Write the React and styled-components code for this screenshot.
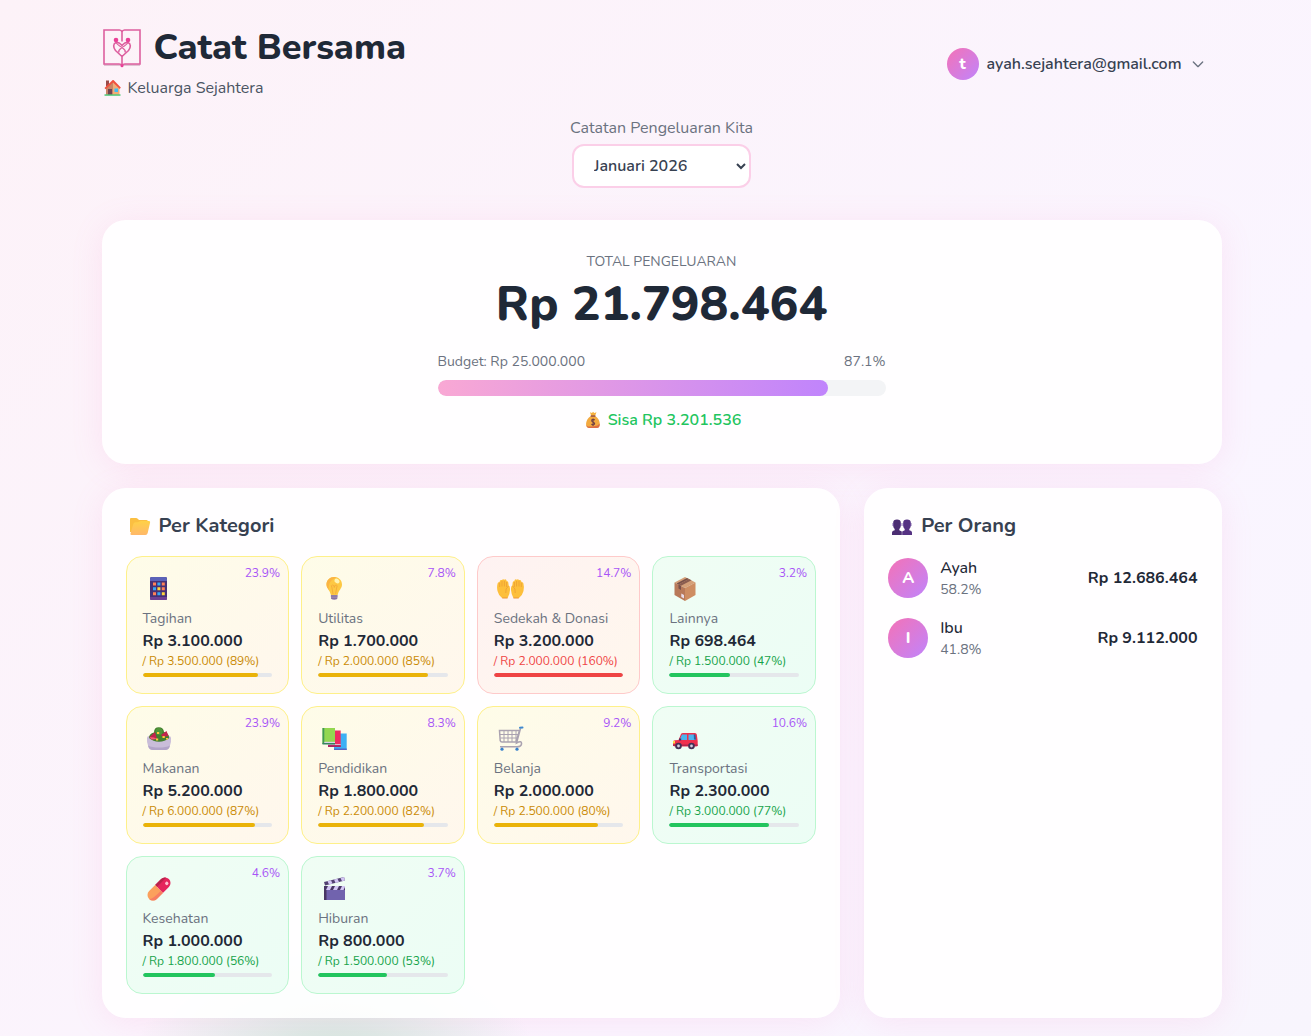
import React, { useState } from 'react';
import styled, { createGlobalStyle } from 'styled-components';

const GlobalStyle = createGlobalStyle`
    * {
        box-sizing: border-box;
    }
    body {
        margin: 0;
        min-height: 100vh;
        font-family: Nunito, Lato, "Open Sans", sans-serif;
        font-size: 16px;
        line-height: 24px;
        color: #1f2937;
        background:
            radial-gradient(200px 120px at 335px 1060px, rgba(205, 229, 217, 0.9), transparent),
            linear-gradient(135deg, #fdf2f8 0%, #faf5ff 70%, #f8f5fd 100%);
    }
    h1, h2, p, ul {
        margin: 0;
        padding: 0;
    }
`

const Page = styled.div`
    padding: 28px 0 18px 12px;
`

const Container = styled.div`
    max-width: 1152px;
    margin: 0 auto;
    padding: 0 16px;
`

const Header = styled.header`
    display: flex;
    align-items: center;
    justify-content: space-between;
    margin-bottom: 16px;
`

const Brand = styled.div`
    display: flex;
    align-items: center;
    gap: 12px;
    margin-bottom: 8px;
    h1 {
        font-size: 36px;
        line-height: 40px;
        font-weight: 800;
    }
`

const Family = styled.p`
    display: flex;
    align-items: center;
    gap: 4px;
    color: #4b5563;
`

const Avatar = styled.span`
    display: flex;
    align-items: center;
    justify-content: center;
    flex-shrink: 0;
    width: ${props => props.$size}px;
    height: ${props => props.$size}px;
    border-radius: 50%;
    background: linear-gradient(135deg, #f472b6, #c084fc);
    color: #fff;
    font-weight: 800;
`

const UserButton = styled.button`
    display: flex;
    align-items: center;
    gap: 8px;
    padding: 8px 16px;
    border: 0;
    background: none;
    font: inherit;
    font-weight: 600;
    color: #374151;
    cursor: pointer;
    svg {
        color: #6b7280;
    }
`

const Period = styled.div`
    display: flex;
    flex-direction: column;
    align-items: center;
    gap: 4px;
    margin-bottom: 32px;
    label {
        color: #6b7280;
    }
    select {
        min-width: 179px;
        padding: 8px 16px;
        border: 2px solid #fbcfe8;
        border-radius: 12px;
        background: #fff;
        font: inherit;
        font-weight: 600;
        color: #374151;
    }
`

const Card = styled.section`
    padding: ${props => props.$padding || 24}px;
    border-radius: 24px;
    background: rgba(255, 255, 255, 0.9);
    box-shadow: 0 4px 32px rgba(244, 114, 182, 0.13);
    h2 {
        display: flex;
        align-items: center;
        gap: 5px;
        margin-bottom: 16px;
        font-size: 20px;
        line-height: 28px;
        font-weight: 700;
        color: #374151;
    }
`

const Total = styled(Card)`
    display: flex;
    flex-direction: column;
    align-items: center;
    margin-bottom: 24px;
`

const TotalLabel = styled.p`
    margin-bottom: 8px;
    font-size: 14px;
    line-height: 20px;
    text-transform: uppercase;
    color: #6b7280;
`

const TotalAmount = styled.p`
    margin-bottom: 24px;
    font-size: 48px;
    line-height: 48px;
    font-weight: 800;
`

const Budget = styled.div`
    width: 100%;
    max-width: 448px;
`

const BudgetLine = styled.div`
    display: flex;
    justify-content: space-between;
    margin-bottom: 8px;
    font-size: 14px;
    line-height: 20px;
    color: #6b7280;
`

const Track = styled.div`
    height: ${props => props.$height}px;
    border-radius: 8px;
    background: ${props => props.$back};
    overflow: hidden;
`

const Fill = styled.div`
    height: 100%;
    border-radius: 8px;
    background: ${props => props.$color};
`

const Remaining = styled.p`
    display: flex;
    align-items: center;
    justify-content: center;
    gap: 4px;
    margin-top: 12px;
    font-weight: 600;
    color: #22c55e;
`

const Columns = styled.div`
    display: grid;
    grid-template-columns: repeat(3, minmax(0, 1fr));
    gap: 24px;
    > :first-child {
        grid-column: span 2;
    }
`

const Tiles = styled.div`
    display: grid;
    grid-template-columns: repeat(4, minmax(0, 1fr));
    gap: 12px;
`

const tones = {
    warn: { back: 'linear-gradient(135deg, #fefce8, #fff7ed)', border: '#fef08a', text: '#ca8a04', bar: '#eab308' },
    over: { back: 'linear-gradient(135deg, #fef2f2, #fff7ed)', border: '#fecaca', text: '#ef4444', bar: '#ef4444' },
    good: { back: 'linear-gradient(135deg, #f0fdf4, #ecfdf5)', border: '#bbf7d0', text: '#16a34a', bar: '#22c55e' },
}

const Tile = styled.article`
    position: relative;
    padding: 16px;
    border: 1px solid ${props => props.$tone.border};
    border-radius: 16px;
    background: ${props => props.$tone.back};
    svg {
        display: block;
        margin-bottom: 4px;
    }
    .name {
        font-size: 14px;
        line-height: 20px;
        color: #6b7280;
    }
    .amount {
        font-weight: 700;
    }
    .limit {
        margin-bottom: 4px;
        font-size: 12px;
        line-height: 16px;
        white-space: nowrap;
        color: ${props => props.$tone.text};
    }
`

const Share = styled.span`
    position: absolute;
    top: 8px;
    right: 8px;
    font-size: 12px;
    line-height: 16px;
    color: #a855f7;
`

const People = styled.ul`
    display: flex;
    flex-direction: column;
    gap: 16px;
    list-style: none;
`

const Person = styled.li`
    display: flex;
    align-items: center;
    gap: 12px;
    .who {
        flex: 1;
        font-weight: 500;
    }
    .share {
        font-size: 14px;
        line-height: 20px;
        font-weight: 400;
        color: #6b7280;
    }
    .amount {
        font-weight: 700;
    }
`

const Logo = () => (
    <svg width="40" height="40" viewBox="0 0 40 40" fill="none" stroke="#dd5f9f" strokeWidth="1.6" aria-hidden="true">
        <path d="M2 37H38" stroke="#c192ad" strokeWidth="1" />
        <path d="M20 13.500V4Q19.500 2 17.500 2H2V36H17Q19.500 36 20 38V27M20 4Q20.500 2 22.500 2H38V36H23Q20.500 36 20 38" />
        <path d="M20 28.500L13.500 22.500C11 19.500 11 15.500 14 14.500C17 13.700 18.500 16 20 17.500C21.500 16 23 13.700 26 14.500C29 15.500 29 19.500 26.500 22.500L20 28.500" />
        <path d="M14 14C14.500 17 17.500 17.500 20 19.500C22.500 21.500 24.200 22 23 24.500M26 14C25.500 17 22.500 17.500 20 19.500C17.500 21.500 15.800 22 17 24.500" strokeWidth="1.300" />
        <g fill="#ea3f97" stroke="none">
            <circle cx="14" cy="12" r="2.300" />
            <circle cx="26" cy="12" r="2.300" />
            <circle cx="20" cy="37.800" r="1.500" />
        </g>
    </svg>
)

const Chevron = () => (
    <svg width="16" height="16" viewBox="0 0 24 24" fill="none" stroke="currentColor" strokeWidth="2" strokeLinecap="round" strokeLinejoin="round" aria-hidden="true">
        <path d="M19 9l-7 7-7-7" />
    </svg>
)

const House = () => (
    <svg width="22" height="24" viewBox="0 0 22 24" aria-hidden="true">
        <path d="M4 4.500h3v6H4z" fill="#9a4b4a" />
        <path d="M4 12L11 5.500L17.500 12V19H4z" fill="#f0ad78" />
        <path d="M4 12L11 5.500L11 19H4z" fill="#c98466" />
        <path d="M2.500 12L10.700 4Q11 3.800 11.500 4L18.800 11.500L17.800 13L11 6.500L3.600 13.200z" fill="#f0503f" />
        <path d="M6 13h4v6H6z" fill="#704452" />
        <path d="M12.500 12.500h3.500v3.500h-3.500z" fill="#3ebcf4" />
        <path d="M2.500 18.300h16v1.500h-16z" fill="#4fc979" />
    </svg>
)

const MoneyBag = () => (
    <svg width="22" height="24" viewBox="0 0 22 24" aria-hidden="true">
        <path d="M8 4.200L10 5L11 3.800L12.300 5L14.500 4.300L13 8H9.200z" fill="#f5b13d" />
        <path d="M9 8H13C16 9.500 18 13 17.800 16.500Q17.600 20 14.500 20H7.600Q4.300 20 4.100 16.500C4 13 6 9.500 9 8z" fill="#f3aa3f" />
        <path d="M4.100 16C4.500 20 9 18 12 18.200Q16 18 17.700 15.500Q18 20 14.500 20H7.600Q4.300 20 4.100 16z" fill="#dc6d45" />
        <path d="M8.700 7.400h4.700v1.300H8.700z" fill="#8c4547" />
        <path d="M12.800 12Q11 10.700 9.700 12Q9.300 13.500 11 14.200Q13.300 15 12.300 16.300Q11 17.500 9.400 16.300M11.100 10.500V18" fill="none" stroke="#714044" strokeWidth="1.100" />
    </svg>
)

const Folder = () => (
    <svg width="28" height="28" viewBox="0 0 28 28" aria-hidden="true">
        <defs>
            <linearGradient id="folder" x1="0" y1="0" x2="0" y2="1">
                <stop offset="0" stopColor="#ffd147" />
                <stop offset="1" stopColor="#ffb86a" />
            </linearGradient>
        </defs>
        <path d="M4 7Q4 6 5 6H10Q11 6 12 7L13 8H20.500Q22 8 22 9.500V20H4z" fill="#fbbf42" />
        <path d="M7.300 12Q7.800 10.300 9.600 10.300H11.500Q12.500 10.300 13.300 9.600Q14 9 15 9H23Q24.500 9 24.100 10.500L21.700 21Q21.200 23 19.500 23H5.800Q4 23 4.500 21.400z" fill="url(#folder)" />
    </svg>
)

const Group = () => (
    <svg width="28" height="28" viewBox="0 0 28 28" fill="#4b2d73" aria-hidden="true">
        <path d="M5.200 10.500Q5.200 7.500 9 7.500T12.800 10.500V14Q12.500 16 11.300 17V18.300L13.800 19.500V23H4V20.500Q4 18.800 6.700 18.300V17Q5.400 16 5.200 14z" />
        <path d="M15.200 10.500Q15.200 7.500 19 7.500T22.800 10.500V14Q22.500 16 21.300 17V18.300Q24 18.800 24 20.500V23H14.200V19.500L16.700 18.300V17Q15.400 16 15.200 14z" fill="#553283" />
        <path d="M4.600 11h1.200v3H4.600zM12.200 11h1.200v3h-1.200zM14.600 11h1.200v3h-1.200zM22.200 11h1.200v3h-1.200z" fill="#6c4a9c" />
    </svg>
)

const Phone = () => (
    <>
        <rect x="7" y="4" width="17" height="23" rx="1.500" fill="#453176" />
        <path d="M8.500 4H22.500Q24 4 24 5.500V8H7V5.500Q7 4 8.500 4z" fill="#5b62b8" />
        <path d="M7 24H24V25.500Q24 27 22.500 27H8.500Q7 27 7 25.500z" fill="#6d3f94" />
        <path d="M10 9.500h3v3h-3zM18.800 14.300h3v3h-3zM10 19.200h3v3h-3z" fill="#ff8257" />
        <path d="M14.400 9.500h3v3h-3zM10 14.300h3v3h-3zM14.400 19.200h3v3h-3z" fill="#35a9f5" />
        <path d="M18.800 9.500h3v3h-3z" fill="#ff8257" />
        <path d="M14.400 14.300h3v3h-3zM18.800 19.200h3v3h-3z" fill="#ffd63d" />
    </>
)

const Bulb = () => (
    <>
        <path d="M13 21.500H19.500V25Q19 27 16.200 27T13 25z" fill="#a795bd" />
        <path d="M12.800 23h6.800M13 25.200h6.200" stroke="#75608e" strokeWidth=".900" />
        <path d="M16.200 4C11.800 4 8.500 7.300 8.500 11.500C8.500 15.500 12 17.500 12.500 21Q12.700 22 13.500 22H19Q19.800 22 20 21C20.500 17.500 24 15.500 24 11.500C24 7.300 20.700 4 16.200 4z" fill="#fdc843" />
        <path d="M16.200 4C11.800 4 8.500 7.300 8.500 11.500C8.500 14 10 15.500 11 17C9.800 11 13 6 19 4.500Q17.800 4 16.200 4z" fill="#fbb443" />
        <path d="M15 21L14 15Q12.500 12 14.500 12Q16.300 12 16.300 14.500Q16.300 12 18.200 12Q20 12 18.600 15L17.600 21" fill="none" stroke="#f2a73a" strokeWidth=".800" />
        <ellipse cx="19" cy="8" rx="2.800" ry="2.100" fill="#fff4b5" transform="rotate(35 19 8)" />
    </>
)

const Hands = () => {
    const hand = 'M16 17Q16.200 13 14.700 12.500L14.300 9.500Q14 8 12.700 8.300L12.300 7Q11.500 5.800 10.300 6.700Q9 5.700 8 7Q6.300 6.500 5.800 8L5.500 9.300Q4 8.700 3.600 10.500Q2.600 14 3.500 18Q4.500 22.500 8.300 25.300H13.500Q15.700 21.500 16 17Z'
    return (
        <>
            <path d={hand} fill="#fdbf3b" />
            <path d={hand} fill="#fdbf3b" transform="matrix(-1 0 0 1 33 0)" />
            <g fill="none" stroke="#e99a33" strokeWidth=".700">
                <path d="M5.700 9.500V14M8 8V13.500M10.400 8V13.500M12.600 9V14M14.500 13Q11 15.500 11.800 20" />
                <path d="M27.300 9.500V14M25 8V13.500M22.600 8V13.500M20.400 9V14M18.500 13Q22 15.500 21.200 20" />
                <path d="M8.300 25H13.500M19.500 25H24.700" stroke="#e5853d" />
            </g>
        </>
    )
}

const Parcel = () => (
    <>
        <path d="M5.500 9.500L16 4L26.500 9.500L16 15z" fill="#d5a079" />
        <path d="M5.500 9.500L16 15V28L5.500 22z" fill="#b87959" />
        <path d="M26.500 9.500L16 15V28L26.500 22z" fill="#ce8d62" />
        <path d="M18 5L7.500 10.500L9.500 11.600L20 6zM9.500 11.500L12 12.800V17L9.500 15.600z" fill="#79514a" />
        <path d="M20 6L9.500 11.600L12 12.800L22.500 7.300z" fill="#8b5d50" />
        <path d="M12.300 20.500L15 22V25.500L12.300 24z" fill="#e9ddeb" />
    </>
)

const Salad = () => (
    <>
        <path d="M4 15Q4 13 6.500 13H25.500Q28 13 28 15Q28.300 20 27 22.500Q26 27 22 27H10Q6 27 5 22.500Q3.700 20 4 15z" fill="#c9bdd9" />
        <path d="M5 22.500Q9 24.500 16 24.500T27 22.500Q26 27 22 27H10Q6 27 5 22.500z" fill="#b2a4c8" />
        <path d="M6 15Q6 10.500 11 9.500Q11 4.300 15.800 4.300T21 9Q25.500 9.500 26.300 15Q22 18.700 16 18.700T6 15z" fill="#44802f" />
        <circle cx="16" cy="8.500" r="3.500" fill="#4f9638" />
        <path d="M6.500 14L12 9L14 16L8.500 16.500zM18 12L23.500 8L25.500 13L20 14z" fill="#c3244d" />
        <path d="M6.500 14L11 14.500L14 16L8.500 16.500z" fill="#f45a73" />
        <path d="M14 9h2.200v2H14zM19.500 13h2.300v2h-2.300zM13 15.500h2.200v2H13zM23 15h2v1.500h-2z" fill="#ffc83d" />
    </>
)

const Books = () => (
    <>
        <path d="M16 10.500H28.700V27H16z" fill="#3db0f4" />
        <path d="M16 25.500h12.700v1.500H16z" fill="#5564c5" />
        <path d="M10 7.500H22.700V24H10z" fill="#ee2b61" />
        <path d="M10 21h12.700v1.200H10z" fill="#e3b7cc" />
        <path d="M10 22.200h12.700v1.800H10z" fill="#a82464" />
        <path d="M4.500 5H17V21H4.500z" fill="#93d750" />
        <path d="M4.500 5H6.300V21H4.500z" fill="#419857" />
        <path d="M6.300 18.800H17V20H6.300z" fill="#d9d4e9" />
        <path d="M4.500 20H17V21.500H4.500z" fill="#368462" />
    </>
)

const Cart = () => (
    <>
        <g fill="none" stroke="#aaa2b0" strokeWidth="1.500">
            <path d="M5.500 7.500H25.500L22 19H8Q6.500 19 6.200 17.500zM26.500 5.500L22.500 20Q28 17 27.500 21Q27 23.800 23 23.800H6" />
            <path d="M10 8V19M14 8V19M18 8V19M22 8V18M6 11.500H24M6.500 15H23" strokeWidth="1" />
        </g>
        <path d="M26 4.700L28.500 4.500" stroke="#3f88cf" strokeWidth="2" strokeLinecap="round" />
        <circle cx="8" cy="26.200" r="1.600" fill="#3981cb" />
        <circle cx="23" cy="26.200" r="1.600" fill="#3981cb" />
    </>
)

const Car = () => (
    <>
        <path d="M9.500 17L12 11Q12.500 10 14 10H26Q27.500 10 27.800 11.500L28.700 18V22Q28.700 23.500 27 23.500H6Q4 23.500 4 21.500V19Q4 17.500 6 17.300z" fill="#ef2f4d" />
        <path d="M10.500 17L13 11.500H18V17zM19.500 11.500H25L26.500 17H19.500z" fill="#4db3ee" />
        <path d="M24.700 11.500H26.300L27 16.500H25z" fill="#2764a0" />
        <path d="M4 18h2v2.500H4z" fill="#ffd446" />
        <path d="M4 21.500H28.700V23H4z" fill="#b4264c" />
        <path d="M10 15.500h2.200v2H10z" fill="#492d62" />
        <g fill="#443055">
            <circle cx="9.500" cy="23" r="3.300" />
            <circle cx="22.500" cy="23" r="3.300" />
        </g>
        <g fill="#d6cddf">
            <circle cx="9.500" cy="23" r="1.400" />
            <circle cx="22.500" cy="23" r="1.400" />
        </g>
    </>
)

const Pill = () => (
    <g transform="rotate(45 16 16)">
        <path d="M10.500 16V7.500A5.500 5.500 0 0 1 21.500 7.500V16z" fill="#e5255c" />
        <path d="M10.500 16V7.500A5.500 5.500 0 0 1 13 3V16z" fill="#b9244c" />
        <path d="M10.500 16H21.500V24.500A5.500 5.500 0 0 1 10.500 24.500z" fill="#fba05d" />
        <path d="M18.500 16H21.500V24.500A5.500 5.500 0 0 1 16 30Q19 28 18.500 16z" fill="#f77d63" />
        <circle cx="17.500" cy="6.500" r="1.700" fill="#ffc0cf" />
    </g>
)

const Clapper = () => (
    <>
        <path d="M6 13H27V27H6z" fill="#7163ae" />
        <path d="M6 13H8.500V27H6z" fill="#483664" />
        <path d="M6 13H27V17H6z" fill="#493766" />
        <path d="M10 13H14L12 17H8zM17 13H21L19 17H15zM24 13H27V14L25.500 17H22z" fill="#d2c5f3" />
        <path d="M6 9L26 4L27 7.500L7 12.500z" fill="#534072" />
        <path d="M9.500 8.200L13 7.300L14.500 10.600L11 11.500zM16 6.500L19.500 5.700L21 9L17.500 9.900zM22.500 5L26 4L27 7.500L24 8.300z" fill="#d2c5f3" />
    </>
)

const categories = [
    { name: 'Tagihan', icon: Phone, share: '23.9%', amount: '3.100.000', limit: '3.500.000', used: 89, tone: 'warn' },
    { name: 'Utilitas', icon: Bulb, share: '7.8%', amount: '1.700.000', limit: '2.000.000', used: 85, tone: 'warn' },
    { name: 'Sedekah & Donasi', icon: Hands, share: '14.7%', amount: '3.200.000', limit: '2.000.000', used: 160, tone: 'over' },
    { name: 'Lainnya', icon: Parcel, share: '3.2%', amount: '698.464', limit: '1.500.000', used: 47, tone: 'good' },
    { name: 'Makanan', icon: Salad, share: '23.9%', amount: '5.200.000', limit: '6.000.000', used: 87, tone: 'warn' },
    { name: 'Pendidikan', icon: Books, share: '8.3%', amount: '1.800.000', limit: '2.200.000', used: 82, tone: 'warn' },
    { name: 'Belanja', icon: Cart, share: '9.2%', amount: '2.000.000', limit: '2.500.000', used: 80, tone: 'warn' },
    { name: 'Transportasi', icon: Car, share: '10.6%', amount: '2.300.000', limit: '3.000.000', used: 77, tone: 'good' },
    { name: 'Kesehatan', icon: Pill, share: '4.6%', amount: '1.000.000', limit: '1.800.000', used: 56, tone: 'good' },
    { name: 'Hiburan', icon: Clapper, share: '3.7%', amount: '800.000', limit: '1.500.000', used: 53, tone: 'good' },
]

const people = [
    { name: 'Ayah', share: '58.2%', amount: '12.686.464' },
    { name: 'Ibu', share: '41.8%', amount: '9.112.000' },
]

const CategoryTile = ({ name, icon: Icon, share, amount, limit, used, tone }) => (
    <Tile $tone={tones[tone]}>
        <Share>{share}</Share>
        <svg width="32" height="32" viewBox="0 0 32 32" aria-hidden="true"><Icon /></svg>
        <p className="name">{name}</p>
        <p className="amount">Rp {amount}</p>
        <p className="limit">/ Rp {limit} ({used}%)</p>
        <Track $height={4} $back="#e5e7eb">
            <Fill $color={tones[tone].bar} style={{ width: `${Math.min(used, 100)}%` }} />
        </Track>
    </Tile>
)

export default () => {
    const [month, setMonth] = useState('2026-01')
    return (
        <Page>
            <GlobalStyle />
            <Container>
                <Header>
                    <div>
                        <Brand>
                            <Logo />
                            <h1>Catat Bersama</h1>
                        </Brand>
                        <Family><House /> Keluarga Sejahtera</Family>
                    </div>
                    <UserButton type="button">
                        <Avatar $size={32}>t</Avatar>
                        ayah.sejahtera@gmail.com
                        <Chevron />
                    </UserButton>
                </Header>

                <Period>
                    <label htmlFor="month">Catatan Pengeluaran Kita</label>
                    <select id="month" value={month} onChange={e => setMonth(e.target.value)}>
                        <option value="2026-01">Januari 2026</option>
                        <option value="2025-12">Desember 2025</option>
                    </select>
                </Period>

                <Total $padding={32}>
                    <TotalLabel>Total Pengeluaran</TotalLabel>
                    <TotalAmount>Rp 21.798.464</TotalAmount>
                    <Budget>
                        <BudgetLine>
                            <span>Budget: Rp 25.000.000</span>
                            <span>87.1%</span>
                        </BudgetLine>
                        <Track $height={16} $back="#f3f4f6">
                            <Fill $color="linear-gradient(90deg, #f9a8d4, #c084fc)" style={{ width: '87.1%' }} />
                        </Track>
                        <Remaining><MoneyBag /> Sisa Rp 3.201.536</Remaining>
                    </Budget>
                </Total>

                <Columns>
                    <Card>
                        <h2><Folder /> Per Kategori</h2>
                        <Tiles>
                            {categories.map(category => <CategoryTile key={category.name} {...category} />)}
                        </Tiles>
                    </Card>
                    <Card>
                        <h2><Group /> Per Orang</h2>
                        <People>
                            {people.map(person => (
                                <Person key={person.name}>
                                    <Avatar $size={40}>{person.name[0]}</Avatar>
                                    <div className="who">
                                        {person.name}
                                        <p className="share">{person.share}</p>
                                    </div>
                                    <span className="amount">Rp {person.amount}</span>
                                </Person>
                            ))}
                        </People>
                    </Card>
                </Columns>
            </Container>
        </Page>
    )
}
